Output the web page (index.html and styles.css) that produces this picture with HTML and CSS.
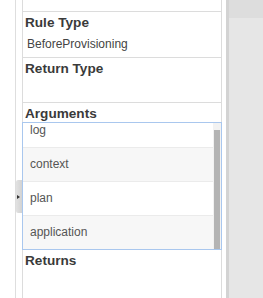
FILE: index.html
```html
<!DOCTYPE html>
<html lang="en">
<head>
    <meta charset="UTF-8">
    <meta name="viewport" content="width=device-width, initial-scale=1.0">
    <title>Rule details</title>
    <link rel="stylesheet" href="styles.css">
</head>
<body>

<div class="page">
    <!-- left margin -->
    <div class="gutter"></div>

    <!-- collapse rail with handle -->
    <div class="rail">
        <div class="handle"><span class="handle-arrow"></span></div>
    </div>

    <!-- rule details panel -->
    <div class="details">
        <div class="section section-top"></div>

        <div class="section section-rule">
            <h3 class="section-title">Rule Type</h3>
            <div class="section-value">BeforeProvisioning</div>
        </div>

        <div class="section section-return">
            <h3 class="section-title">Return Type</h3>
        </div>

        <div class="section section-args">
            <h3 class="section-title">Arguments</h3>
            <div class="arg-list">
                <div class="arg-rows">
                    <div class="arg-rows-inner">
                        <div class="arg-row">log</div>
                        <div class="arg-row alt">context</div>
                        <div class="arg-row">plan</div>
                        <div class="arg-row alt">application</div>
                    </div>
                </div>
                <div class="arg-scroll"><div class="arg-thumb"></div></div>
            </div>
        </div>

        <div class="section section-returns">
            <h3 class="section-title">Returns</h3>
        </div>
    </div>

    <div class="gap"></div>

    <!-- editor area on the right -->
    <div class="side">
        <div class="side-head"></div>
    </div>
</div>

</body>
</html>
```

FILE: styles.css
```css
body, html {
    margin: 0;
    padding: 0;
    height: 100%;
}

body {
    font-family: "Liberation Sans", Arial, sans-serif;
    background: #fff;
}

.page {
    display: flex;
    height: 298px;
}

.gutter {
    width: 15px;
}

/* rail between the page edge and the panel */
.rail {
    width: 6px;
    border-left: 1px solid #dedede;
}

.handle {
    margin-top: 180px;
    height: 33px;
    display: flex;
    align-items: center;
    padding-left: 1px;
    background: linear-gradient(to right, #e2e2e2, #d2d2d2);
    border-radius: 2px 0 0 2px;
}

.handle-arrow {
    width: 0;
    height: 0;
    border-left: 3px solid #333;
    border-top: 2.5px solid transparent;
    border-bottom: 2.5px solid transparent;
}

/* panel */
.details {
    width: 200px;
    box-sizing: border-box;
    border-left: 1px solid #dcdcdc;
    border-right: 1px solid #dcdcdc;
    display: flex;
    flex-direction: column;
}

.section {
    border-bottom: 1px solid #dcdcdc;
    padding: 3px 0 0 2px;
}

.section-top {
    height: 11px;
    padding: 0;
}

.section-rule {
    height: 42px;
}

.section-return {
    height: 41px;
}

.section-args {
    border-bottom: none;
    padding-bottom: 0;
}

.section-returns {
    border-bottom: none;
    flex: 1;
}

.section-title {
    margin: 0;
    font-size: 13.6px;
    line-height: 16px;
    font-weight: bold;
    color: #3a3a3a;
}

.section-value {
    margin-top: 6px;
    padding-left: 2px;
    font-size: 12px;
    line-height: 14px;
    color: #444;
}

/* argument list */
.arg-list {
    display: flex;
    margin: 0 -1px 0 -3px;
    border: 1px solid #a9c7ee;
    height: 126px;
}

.arg-rows {
    flex: 1;
    overflow: hidden;
}

.arg-rows-inner {
    margin-top: -9px;
}

.arg-row {
    height: 33px;
    line-height: 33px;
    padding-left: 7px;
    border-bottom: 1px solid #ebebeb;
    font-size: 12px;
    color: #555;
    background: #fff;
}

.arg-row.alt {
    background: #f7f7f7;
}

.arg-scroll {
    width: 8px;
    box-sizing: border-box;
    padding: 7px 1px 0 1px;
    background: #f2f2f2;
    display: flex;
}

.arg-thumb {
    flex: 1;
    background: #b4b4b4;
}

.gap {
    width: 4px;
}

/* right side */
.side {
    flex: 1;
    background: #e6e6e6;
    border-left: 3px solid #d3d3d3;
}

.side-head {
    height: 18px;
    background: #dddddd;
}
```
